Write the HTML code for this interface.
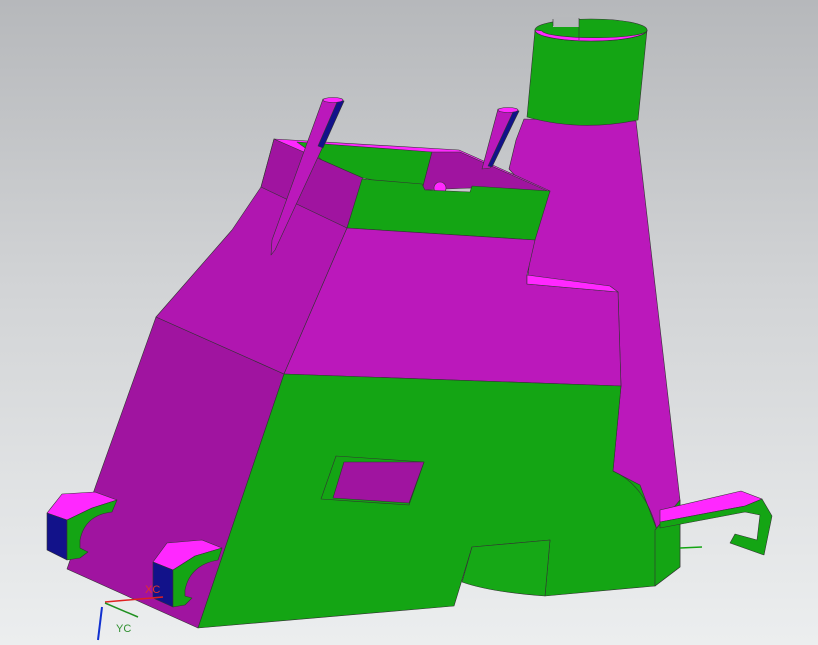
<!DOCTYPE html>
<html><head><style>
html,body{margin:0;padding:0;width:818px;height:645px;overflow:hidden}
body{background:linear-gradient(#b6b8bb 0%,#d2d4d6 45%,#eceeef 100%)}
svg{position:absolute;left:0;top:0}
</style></head><body>
<svg width="818" height="645" viewBox="0 0 818 645" xmlns="http://www.w3.org/2000/svg" stroke="#333" stroke-width="0.6" stroke-linejoin="round">
<!-- cone -->
<polygon points="524,119 636,121 680,500 680,567 655,586 613,471 621,386 618,292 527,284 532,240 537,200 509,169 516,140" fill="#bb18bb"/>
<!-- cylinder top -->
<path d="M535,30 L527,117 Q580,132 638,120 L647,30 Z" fill="#14a514"/>
<ellipse cx="591" cy="30" rx="56" ry="11" fill="#14a514"/>
<path d="M535,30 A56,11 0 0 0 647,30 A51,7 0 0 1 542,31 Z" fill="#ff28ff"/>
<polygon points="553,17 579,17 579,27 553,27" fill="#b7b9bc" stroke="none"/>
<line x1="579" y1="18" x2="579" y2="40" stroke="#333"/>
<line x1="553" y1="19" x2="553" y2="26" stroke="#333"/>
<!-- left dark face -->
<polygon points="156,317 284,374 198,628 67,569 96,485" fill="#a014a0"/>
<!-- upper left sloped face -->
<polygon points="156,317 232,230 261,187 274,139 300,150 322,160 363,178 347,228 284,374" fill="#b016b0"/>
<polygon points="274,139 300,150 322,160 363,178 347,228 261,187" fill="#a014a0"/>
<!-- box rim and interior -->
<polygon points="274,139 459,150 477,158 550,191 363,178 322,160" fill="#ff28ff"/>
<polygon points="297,142 432,152 422,190 363,178 322,160" fill="#14a514"/>
<polygon points="432,152 460,152 550,192 470,188 422,190" fill="#a014a0"/>
<circle cx="440" cy="188" r="6" fill="#ff28ff"/>
<!-- green box front -->
<polygon points="362,179 422,184 425,190 470,192 472,186 550,191 535,240 347,228" fill="#14a514"/>
<!-- middle purple face -->
<polygon points="347,228 535,240 527,275 527,284 618,292 621,386 284,374" fill="#bb18bb"/>
<polygon points="527,275 527,284 618,292 610,286" fill="#ff28ff"/>
<!-- green front face -->
<polygon points="284,374 621,386 613,471 640,485 657,530 655,586 545,596 550,540 472,547 454,606 198,628" fill="#14a514"/>
<path d="M472,547 L550,540 L545,596 Q490,592 462,582 Z" fill="#16a816"/>
<path d="M613,471 Q645,485 657,530" fill="none"/>
<polygon points="655,586 655,530 680,500 680,567" fill="#14a514"/>
<!-- hole -->
<polygon points="336,456 424,462 409,505 321,499" fill="#14a514"/>
<polygon points="344,462 424,462 409,503 333,498" fill="#a014a0"/>
<!-- pins -->
<polygon points="323,99 344,101 275,250 271,255 272,240" fill="#bb18bb"/>
<polygon points="338,100 344,101 323,148 318,146" fill="#12128a"/>
<ellipse cx="333" cy="100" rx="10" ry="2.5" fill="#ff28ff"/>
<polygon points="498,109 519,111 490,168 482,169" fill="#bb18bb"/>
<polygon points="514,110 519,111 492,167 488,166" fill="#12128a"/>
<ellipse cx="508" cy="110" rx="10" ry="2.5" fill="#ff28ff"/>
<!-- bracket 1 -->
<polygon points="47,513 62,494 95,492 117,500 92,508 67,520" fill="#ff28ff"/>
<polygon points="47,513 67,520 67,560 47,550" fill="#12128a"/>
<path d="M67,520 L92,508 L117,500 L112,512 Q85,515 80,540 L80,548 L88,552 L80,558 L67,560 Z" fill="#14a514"/>
<!-- bracket 2 -->
<polygon points="153,562 167,543 202,540 222,548 195,556 173,570" fill="#ff28ff"/>
<polygon points="153,562 173,570 173,607 153,598" fill="#12128a"/>
<path d="M173,570 L195,556 L222,548 L218,560 Q190,565 185,590 L185,596 L192,598 L185,605 L173,607 Z" fill="#14a514"/>
<!-- right bracket -->
<polygon points="660,510 741,491 762,499 745,506 660,522" fill="#ff28ff"/>
<path d="M660,522 L745,506 L762,499 L772,516 L764,555 L730,543 L735,534 L757,540 L760,515 L745,512 L660,528 Z" fill="#14a514"/>
<line x1="680" y1="548" x2="702" y2="547" stroke="#14a514" stroke-width="1.5"/>
<!-- axes -->
<line x1="105" y1="602" x2="163" y2="597" stroke="#e02020" stroke-width="1.5"/>
<line x1="105" y1="603" x2="138" y2="617" stroke="#209020" stroke-width="1.5"/>
<line x1="102" y1="607" x2="98" y2="640" stroke="#1030d0" stroke-width="2"/>
<text x="145" y="593" font-family="Liberation Sans,sans-serif" font-size="11" fill="#e03030" stroke="none">XC</text>
<text x="116" y="632" font-family="Liberation Sans,sans-serif" font-size="11" fill="#309030" stroke="none">YC</text>
</svg>
</body></html>
